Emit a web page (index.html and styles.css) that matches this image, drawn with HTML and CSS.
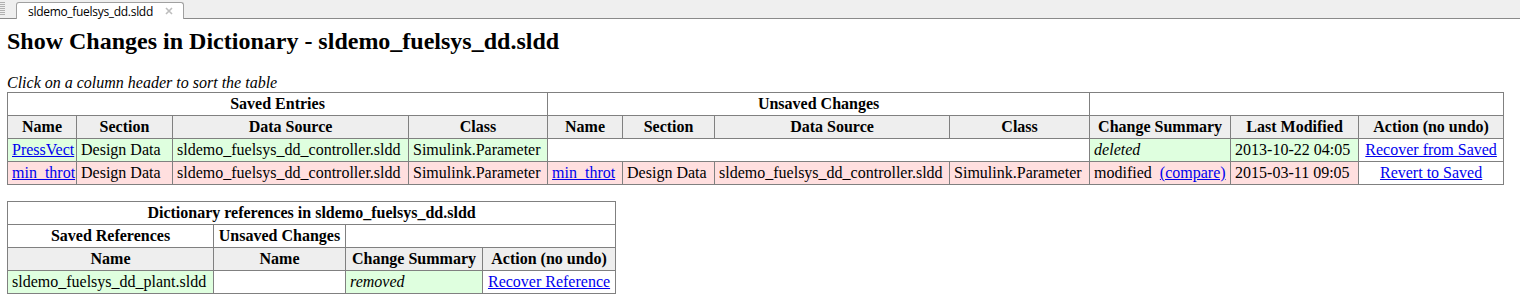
FILE: index.html
```html
<!DOCTYPE html>
<html>
<head>
<meta charset="utf-8">
<link rel="stylesheet" href="styles.css">
</head>
<body>
<div class="tabbar">
  <div class="grip"></div>
  <div class="tab">
    <span class="tab-title">sldemo_fuelsys_dd.sldd</span>
    <svg class="tab-close" width="8" height="8" viewBox="0 0 8 8"><path d="M1 1L7 7M7 1L1 7" stroke="#bdbdbd" stroke-width="1.6" fill="none"/></svg>
  </div>
</div>
<div class="content">
  <h2 class="title">Show Changes in Dictionary - sldemo_fuelsys_dd.sldd</h2>
  <p class="hint">Click on a column header to sort the table</p>
  <table class="grid changes">
    <colgroup>
      <col class="w69"><col class="w96"><col class="w236"><col class="w139">
      <col class="w75"><col class="w92"><col class="w235"><col class="w140">
      <col class="w141"><col class="w128"><col class="w145">
    </colgroup>
    <tr class="group">
      <th colspan="4">Saved Entries</th>
      <th colspan="4">Unsaved Changes</th>
      <th colspan="3"></th>
    </tr>
    <tr class="cols">
      <th>Name</th><th>Section</th><th>Data Source</th><th>Class</th>
      <th>Name</th><th>Section</th><th>Data Source</th><th>Class</th>
      <th>Change Summary</th><th>Last Modified</th><th>Action (no undo)</th>
    </tr>
    <tr>
      <td class="add"><a href="#">PressVect</a></td>
      <td class="add">Design Data</td>
      <td class="add">sldemo_fuelsys_dd_controller.sldd</td>
      <td class="add">Simulink.Parameter</td>
      <td colspan="4"></td>
      <td class="add"><i>deleted</i></td>
      <td class="add">2013-10-22 04:05</td>
      <td class="center"><a href="#">Recover from Saved</a></td>
    </tr>
    <tr>
      <td class="mod"><a href="#">min_throt</a></td>
      <td class="mod">Design Data</td>
      <td class="mod">sldemo_fuelsys_dd_controller.sldd</td>
      <td class="mod">Simulink.Parameter</td>
      <td class="mod"><a href="#">min_throt</a></td>
      <td class="mod">Design Data</td>
      <td class="mod">sldemo_fuelsys_dd_controller.sldd</td>
      <td class="mod">Simulink.Parameter</td>
      <td class="mod">modified&nbsp; <a href="#">(compare)</a></td>
      <td class="mod">2015-03-11 09:05</td>
      <td class="center"><a href="#">Revert to Saved</a></td>
    </tr>
  </table>
  <table class="grid refs">
    <colgroup>
      <col class="w206"><col class="w132"><col class="w137"><col class="w133">
    </colgroup>
    <tr class="group">
      <th colspan="4">Dictionary references in sldemo_fuelsys_dd.sldd</th>
    </tr>
    <tr class="group">
      <th>Saved References</th>
      <th>Unsaved Changes</th>
      <th colspan="2"></th>
    </tr>
    <tr class="cols">
      <th>Name</th><th>Name</th><th>Change Summary</th><th>Action (no undo)</th>
    </tr>
    <tr>
      <td class="add">sldemo_fuelsys_dd_plant.sldd</td>
      <td></td>
      <td class="add"><i>removed</i></td>
      <td class="center"><a href="#">Recover Reference</a></td>
    </tr>
  </table>
</div>
</body>
</html>
```
FILE: styles.css
```css
html, body {
  margin: 0;
  padding: 0;
  background: #ffffff;
}
body {
  font-family: "Liberation Serif", "Times New Roman", serif;
  font-size: 16px;
  color: #000;
}
.tabbar {
  height: 18px;
  background: #efefef;
  border-bottom: 1px solid #8a8a8a;
  display: flex;
  align-items: flex-end;
}
.grip {
  width: 5px;
  height: 14px;
  margin: 0 2px 2px 0;
  background: repeating-linear-gradient(to bottom, #b0b0b0 0, #b0b0b0 1px, transparent 1px, transparent 2px);
}
.tab {
  margin-left: 9px;
  width: 168px;
  height: 17px;
  box-sizing: border-box;
  background: #ffffff;
  border: 1px solid #a0a0a0;
  border-bottom: none;
  border-radius: 3px 3px 0 0;
  display: flex;
  align-items: center;
  padding-left: 11px;
  margin-bottom: -1px;
  font-family: "Open Sans", "DejaVu Sans", sans-serif;
  font-size: 12px;
  letter-spacing: -0.3px;
  color: #000;
}
.tab-title {
  flex: none;
}
.tab-close {
  flex: none;
  margin-left: auto;
  margin-right: 10px;
}
.content {
  padding: 0 7px;
}
.title {
  font-size: 24px;
  font-weight: bold;
  margin: 8px 0 0 0;
  line-height: 28px;
}
.hint {
  font-style: italic;
  margin: 18px 0 0 0;
  line-height: 19px;
}
.grid {
  border-collapse: collapse;
  border: 1px solid #808080;
  table-layout: fixed;
}
.changes {
  width: 1497px;
}
.refs {
  width: 609px;
  margin-top: 16px;
}
.grid th, .grid td {
  border: 1px solid #808080;
  height: 23px;
  padding: 0 4px;
  white-space: nowrap;
  overflow: hidden;
  box-sizing: border-box;
}
.grid th {
  font-weight: bold;
  text-align: center;
  background: #ffffff;
}
.grid tr.cols th {
  background: #eeeeee;
}
.grid td.add {
  background: #dfffdf;
}
.grid td.mod {
  background: #ffdfdf;
}
.grid td.center {
  text-align: center;
}
.w69 { width: 69px; }
.w96 { width: 96px; }
.w236 { width: 236px; }
.w139 { width: 139px; }
.w75 { width: 75px; }
.w92 { width: 92px; }
.w235 { width: 235px; }
.w140 { width: 140px; }
.w141 { width: 141px; }
.w128 { width: 128px; }
.w145 { width: 145px; }
.w206 { width: 206px; }
.w132 { width: 132px; }
.w137 { width: 137px; }
.w133 { width: 133px; }
a {
  color: #0000ee;
  text-decoration: underline;
}
```
